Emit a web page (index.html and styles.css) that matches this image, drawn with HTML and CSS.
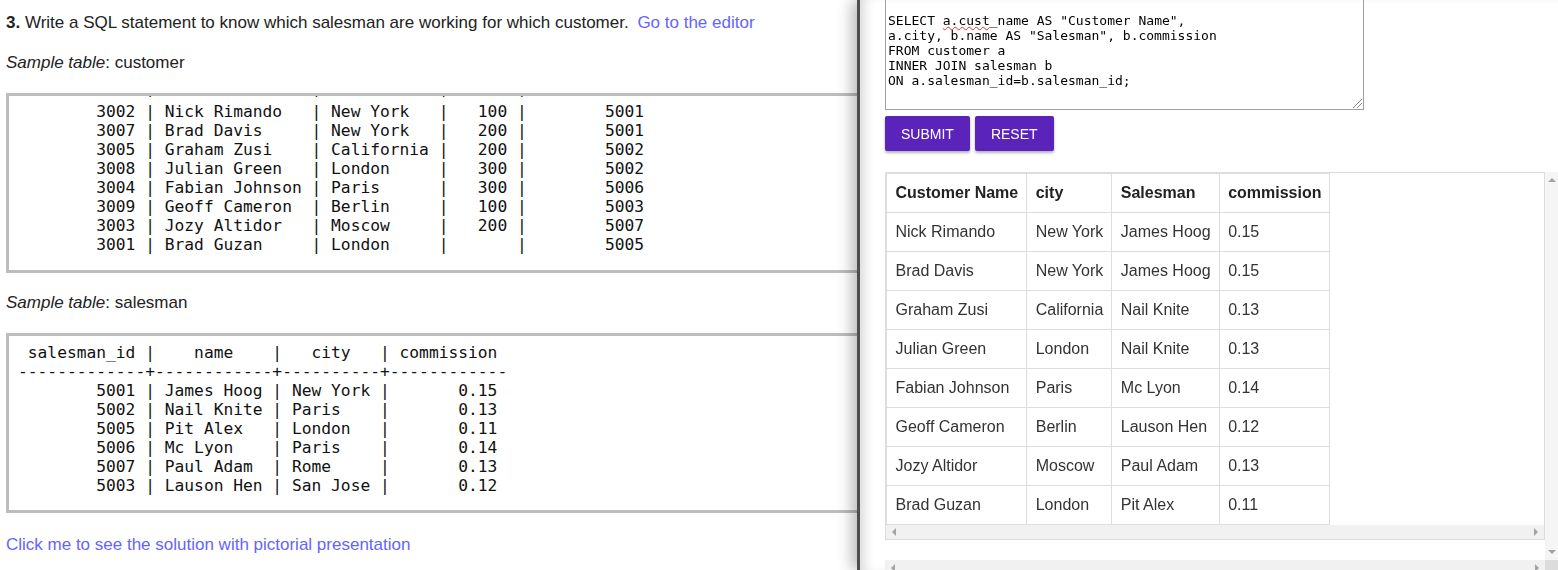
FILE: index.html
```html
<!DOCTYPE html>
<html lang="en">
<head>
<meta charset="utf-8">
<title>SQL JOIN exercise</title>
<link rel="stylesheet" href="styles.css">
</head>
<body>
<main class="article">
  <p class="question"><b>3.</b> Write a SQL statement to know which salesman are working for which customer. <a class="link editor-link" href="#">Go to the editor</a></p>
  <p class="caption"><i>Sample table</i>: customer</p>
  <div class="sample sample-customer"><pre> customer_id |   cust_name    |    city    | grade | salesman_id 
-------------+----------------+------------+-------+-------------
        3002 | Nick Rimando   | New York   |   100 |        5001
        3007 | Brad Davis     | New York   |   200 |        5001
        3005 | Graham Zusi    | California |   200 |        5002
        3008 | Julian Green   | London     |   300 |        5002
        3004 | Fabian Johnson | Paris      |   300 |        5006
        3009 | Geoff Cameron  | Berlin     |   100 |        5003
        3003 | Jozy Altidor   | Moscow     |   200 |        5007
        3001 | Brad Guzan     | London     |       |        5005</pre></div>
  <p class="caption"><i>Sample table</i>: salesman</p>
  <div class="sample"><pre> salesman_id |    name    |   city   | commission 
-------------+------------+----------+------------
        5001 | James Hoog | New York |       0.15
        5002 | Nail Knite | Paris    |       0.13
        5005 | Pit Alex   | London   |       0.11
        5006 | Mc Lyon    | Paris    |       0.14
        5007 | Paul Adam  | Rome     |       0.13
        5003 | Lauson Hen | San Jose |       0.12</pre></div>
  <a class="link solution-link" href="#">Click me to see the solution with pictorial presentation</a>
</main>

<aside class="editor-panel">
  <div class="code-box">SELECT <span class="misspelt">a.cust</span>_name AS "Customer Name",
a.city, b.name AS "Salesman", b.commission
FROM customer a
INNER JOIN salesman b
ON a.salesman_id=b.salesman_id;<span class="grip"></span></div>
  <div class="actions">
    <button class="btn" type="button">SUBMIT</button>
    <button class="btn" type="button">RESET</button>
  </div>
  <div class="result">
    <div class="result-view">
      <div class="result-box">
        <table class="result-table">
          <thead>
            <tr><th>Customer Name</th><th>city</th><th>Salesman</th><th>commission</th></tr>
          </thead>
          <tbody>
            <tr><td>Nick Rimando</td><td>New York</td><td>James Hoog</td><td>0.15</td></tr>
            <tr><td>Brad Davis</td><td>New York</td><td>James Hoog</td><td>0.15</td></tr>
            <tr><td>Graham Zusi</td><td>California</td><td>Nail Knite</td><td>0.13</td></tr>
            <tr><td>Julian Green</td><td>London</td><td>Nail Knite</td><td>0.13</td></tr>
            <tr><td>Fabian Johnson</td><td>Paris</td><td>Mc Lyon</td><td>0.14</td></tr>
            <tr><td>Geoff Cameron</td><td>Berlin</td><td>Lauson Hen</td><td>0.12</td></tr>
            <tr><td>Jozy Altidor</td><td>Moscow</td><td>Paul Adam</td><td>0.13</td></tr>
            <tr><td>Brad Guzan</td><td>London</td><td>Pit Alex</td><td>0.11</td></tr>
          </tbody>
        </table>
        <div class="hbar"><span class="arr arr-left"></span><span class="arr arr-right"></span></div>
      </div>
    </div>
    <div class="vbar"><span class="arr arr-up"></span><span class="arr arr-down"></span></div>
    <div class="hbar hbar-outer"><span class="arr arr-left"></span><span class="arr arr-right"></span></div>
    <div class="corner"></div>
  </div>
</aside>
</body>
</html>
```
FILE: styles.css
```css
* { box-sizing: border-box; }

html, body {
  margin: 0;
  padding: 0;
  background: #fff;
  overflow: hidden;
}

body {
  width: 1558px;
  height: 570px;
  font-family: "Liberation Sans", Arial, sans-serif;
  color: #222;
}

/* ---------- left article ---------- */
.article {
  display: flex;
  flex-direction: column;
  align-items: flex-start;
  gap: 20px;
  padding: 13px 0 0 6px;
  font-size: 17px;
  line-height: 20px;
}

.article p { margin: 0; }

.link {
  color: #6464ff;
  text-decoration: none;
}

.editor-link { margin-left: 4px; }

.sample {
  width: 1540px;
  height: 180px;
  border: 3px solid #bdbdbd;
  overflow: hidden;
  display: flex;
  flex-direction: column;
}

.sample pre {
  margin: 0;
  padding: 7px 9px 15px;
  font-family: "DejaVu Sans Mono", monospace;
  font-size: 16.25px;
  line-height: 19px;
  color: #111;
}

.sample-customer { justify-content: flex-end; }
.sample-customer pre { padding-bottom: 16px; }

.solution-link { margin-top: 2px; }

/* ---------- editor overlay ---------- */
.editor-panel {
  position: fixed;
  top: 0;
  right: 0;
  bottom: 0;
  width: 701px;
  background: #fff;
  border-left: 3px solid #4e4e4e;
  box-shadow: -5px 0 14px rgba(0, 0, 0, 0.28), inset 10px 0 12px -6px rgba(0, 0, 0, 0.16);
  padding-left: 25px;
  overflow: hidden;
}

.code-box {
  position: relative;
  width: 479px;
  height: 110px;
  border: 1px solid #a0a0a0;
  border-top: none;
  padding: 13px 2px 2px;
  font-family: "DejaVu Sans Mono", monospace;
  font-size: 13px;
  line-height: 15px;
  white-space: pre;
  color: #000;
}

.misspelt {
  text-decoration-line: underline;
  text-decoration-style: wavy;
  text-decoration-color: #e03030;
  text-decoration-thickness: 1px;
  text-underline-offset: 1px;
}

.grip {
  position: absolute;
  right: 1px;
  bottom: 1px;
  width: 9px;
  height: 9px;
  background:
    linear-gradient(135deg, transparent 0 45%, #8a8a8a 45% 55%, transparent 55% 100%) no-repeat right bottom / 9px 9px,
    linear-gradient(135deg, transparent 0 45%, #8a8a8a 45% 55%, transparent 55% 100%) no-repeat right bottom / 5px 5px;
}

.actions {
  display: flex;
  gap: 5px;
  margin-top: 6px;
}

.btn {
  height: 35px;
  padding: 0 16px;
  border: none;
  border-radius: 2px;
  background: #5a23b9;
  color: #fff;
  font-family: "Liberation Sans", Arial, sans-serif;
  font-size: 14px;
  box-shadow: 0 2px 3px rgba(0, 0, 0, 0.3);
}

.result {
  display: grid;
  grid-template-columns: 660px 13px;
  grid-template-rows: 388px 15px;
  margin-top: 21px;
}

.result-box {
  height: 368px;
  border: 1px solid #dcdcdc;
  display: flex;
  flex-direction: column;
  align-items: flex-start;
  justify-content: space-between;
  background: #fff;
}

.result-box .hbar { align-self: stretch; }

.result-table {
  border-collapse: collapse;
  font-size: 16px;
  line-height: 22px;
  color: #333;
  border: 1px solid #ddd;
}

.result-table th,
.result-table td {
  border: 1px solid #ddd;
  padding: 8px 8px 8px 8.5px;
  text-align: left;
  white-space: nowrap;
}

.result-table th {
  font-weight: bold;
  color: #222;
}

/* scrollbars drawn as plain strips */
.hbar {
  height: 15px;
  background: #f1f1f1;
  display: flex;
  align-items: center;
  justify-content: space-between;
  padding: 0 6px;
}

.vbar {
  background: #f5f5f5;
  display: flex;
  flex-direction: column;
  align-items: center;
  justify-content: space-between;
  padding: 6px 0;
}

.corner { background: #dcdcdc; }

.arr {
  width: 0;
  height: 0;
  border-style: solid;
  border-color: transparent;
}

.arr-left  { border-width: 4px 4px 4px 0; border-right-color: #a3a3a3; }
.arr-right { border-width: 4px 0 4px 4px; border-left-color: #a3a3a3; }
.arr-up    { border-width: 0 4px 4px 4px; border-bottom-color: #a3a3a3; }
.arr-down  { border-width: 4px 4px 0 4px; border-top-color: #a3a3a3; }
```
